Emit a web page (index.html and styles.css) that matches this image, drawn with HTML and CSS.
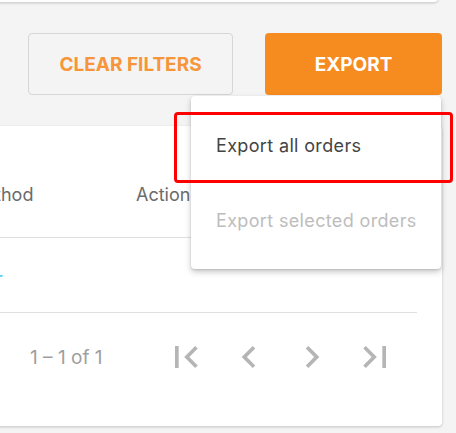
FILE: index.html
```html
<!DOCTYPE html>
<html lang="en">
<head>
    <meta charset="UTF-8">
    <meta name="viewport" content="width=device-width, initial-scale=1.0">
    <title>Orders</title>
    <link rel="stylesheet" href="styles.css">
</head>
<body>
    <div class="filters-card"></div>

    <div class="toolbar">
        <button class="btn btn-outline">Clear filters</button>
        <button class="btn btn-primary">Export</button>
    </div>

    <div class="orders-card">
        <div class="orders-head">
            <span class="cell">Date</span>
            <span class="cell">Payment Method</span>
            <span class="cell">Actions</span>
        </div>
        <div class="orders-row">
            <span class="cell">12/03/2021</span>
            <span class="cell"><a class="link">Bank transfer</a></span>
            <span class="cell"></span>
        </div>
        <div class="pager">
            <span class="pager-range">1 – 1 of 1</span>
            <button class="pager-btn" disabled>
                <svg viewBox="0 0 24 24"><path d="M18.41 16.59L13.820 12l4.59-4.59L17 6l-6 6 6 6zM6 6h2v12H6z"/></svg>
            </button>
            <button class="pager-btn" disabled>
                <svg viewBox="0 0 24 24"><path d="M15.41 7.41L14 6l-6 6 6 6 1.41-1.41L10.83 12z"/></svg>
            </button>
            <button class="pager-btn" disabled>
                <svg viewBox="0 0 24 24"><path d="M10 6L8.59 7.41 13.17 12l-4.58 4.59L10 18l6-6z"/></svg>
            </button>
            <button class="pager-btn" disabled>
                <svg viewBox="0 0 24 24"><path d="M5.59 7.41L10.18 12l-4.59 4.59L7 18l6-6-6-6zM16 6h2v12h-2z"/></svg>
            </button>
        </div>
    </div>

    <ul class="export-menu">
        <li class="menu-item">Export all orders</li>
        <li class="menu-item disabled">Export selected orders</li>
    </ul>
    <div class="highlight"></div>
</body>
</html>
```

FILE: styles.css
```css
html, body {
    margin: 0;
    height: 100%;
    overflow: hidden;
}
body {
    position: relative;
    font-family: Inter, "Noto Sans", sans-serif;
    background-color: #f4f4f4;
    color: #333;
}

.filters-card {
    height: 42px;
    margin: -40px 18px 0 -20px;
    background-color: #fff;
    border-radius: 0 0 4px 4px;
    box-shadow: 0 1px 3px rgba(0, 0, 0, 0.2);
}

.toolbar {
    display: flex;
    justify-content: flex-end;
    gap: 32px;
    margin-top: 31px;
    padding-right: 14px;
}
.btn {
    height: 62px;
    font-family: Inter, "Noto Sans", sans-serif;
    font-size: 19px;
    font-weight: 700;
    text-transform: uppercase;
    border-radius: 4px;
    cursor: pointer;
}
.btn-outline {
    width: 205px;
    background-color: transparent;
    border: 1px solid #d6d6d6;
    color: #f7953a;
}
.btn-primary {
    width: 177px;
    background-color: #f68b1f;
    border: none;
    color: #fff;
}

.orders-card {
    width: 742px;
    margin: 31px 0 0 -300px;
    background-color: #fff;
    border-radius: 0 4px 4px 0;
    box-shadow: 0 1px 3px rgba(0, 0, 0, 0.2);
}
.orders-head, .orders-row {
    display: grid;
    grid-template-columns: 189px 247px 1fr;
    align-items: center;
    margin-right: 25px;
    border-bottom: 1px solid #e0e0e0;
    font-size: 18px;
}
.orders-head {
    height: 112px;
    padding-top: 26px;
    box-sizing: border-box;
    color: #6b6b6b;
}
.orders-row {
    height: 75px;
    padding-top: 6px;
    box-sizing: border-box;
}
.link {
    color: #4fc3f7;
}

.pager {
    display: flex;
    align-items: center;
    height: 113px;
    padding: 0 0 25px 330px;
    box-sizing: border-box;
}
.pager-range {
    width: 134px;
    font-size: 19px;
    color: #9e9e9e;
}
.pager-btn {
    width: 44px;
    height: 44px;
    margin-right: 19px;
    padding: 0;
    background: none;
    border: none;
}
.pager-btn svg {
    display: block;
    width: 44px;
    height: 44px;
    fill: #b5b5b5;
}

.export-menu {
    position: absolute;
    left: 191px;
    top: 96px;
    width: 250px;
    margin: 0;
    padding: 12px 0 11px;
    list-style: none;
    background-color: #fff;
    border-radius: 4px;
    box-shadow: 0 3px 6px rgba(0, 0, 0, 0.22), 0 1px 2px rgba(0, 0, 0, 0.12);
}
.menu-item {
    height: 75px;
    line-height: 75px;
    padding-left: 25px;
    font-size: 18px;
    letter-spacing: 0.35px;
    color: #444;
}
.menu-item.disabled {
    color: #bdbdbd;
}

.highlight {
    position: absolute;
    left: 174px;
    top: 112px;
    box-sizing: border-box;
    width: 279px;
    height: 71px;
    border: 3px solid #ff0000;
    border-radius: 4px;
}
```
